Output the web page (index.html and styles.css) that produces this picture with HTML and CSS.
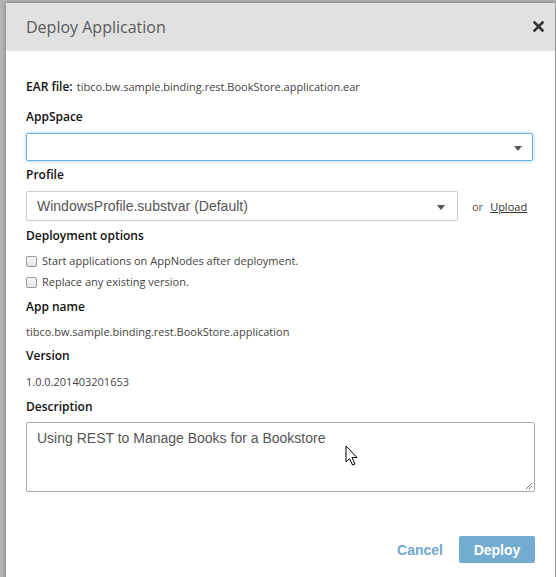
FILE: index.html
```html
<!DOCTYPE html>
<html>
<head>
<meta charset="utf-8">
<link rel="stylesheet" href="styles.css">
</head>
<body>
<div class="modal">
  <div class="modal-header">
    <div class="title">Deploy Application</div>
    <svg class="close" width="11" height="11" viewBox="0 0 11 11"><path d="M1.5 1.5 L9.5 9.5 M9.5 1.5 L1.5 9.5" stroke="#333" stroke-width="2.6" stroke-linecap="square"/></svg>
  </div>
  <div class="modal-body">
    <div class="row ear"><span class="lbl">EAR file:</span> <span class="val">tibco.bw.sample.binding.rest.BookStore.application.ear</span></div>
    <div class="lbl block l-appspace">AppSpace</div>
    <div class="select focus"><span></span><i class="caret"></i></div>
    <div class="lbl block l-profile">Profile</div>
    <div class="profile-row">
      <div class="select profile"><span>WindowsProfile.substvar (Default)</span><i class="caret"></i></div>
      <span class="or">or</span><span class="upload">Upload</span>
    </div>
    <div class="lbl block l-deploy">Deployment options</div>
    <div class="check c1"><span class="box"></span><span>Start applications on AppNodes after deployment.</span></div>
    <div class="check c2"><span class="box"></span><span>Replace any existing version.</span></div>
    <div class="lbl block l-app">App name</div>
    <div class="val block v-app">tibco.bw.sample.binding.rest.BookStore.application</div>
    <div class="lbl block l-ver">Version</div>
    <div class="val block v-ver">1.0.0.201403201653</div>
    <div class="lbl block l-desc">Description</div>
    <div class="textarea">Using REST to Manage Books for a Bookstore
      <svg class="grip" width="8" height="8" viewBox="0 0 8 8"><path d="M7 1 L1 7 M7 4 L4 7" stroke="#777" stroke-width="1"/></svg>
    </div>
    <div class="footer">
      <span class="cancel">Cancel</span>
      <span class="deploy">Deploy</span>
    </div>
  </div>
</div>
<svg class="cursor" width="14" height="22" viewBox="0 0 14 22"><path d="M1 1 L1 17 L4.5 13.5 L7.5 20 L10 19 L7 12.5 L12 12.5 Z" fill="#fff" stroke="#000" stroke-width="1" stroke-linejoin="miter"/></svg>
</body>
</html>
```
FILE: styles.css
```css
html, body {
  margin: 0;
  padding: 0;
}
body {
  width: 556px;
  height: 577px;
  overflow: hidden;
  background: #b4b4b4;
  position: relative;
  font-family: "Open Sans", "Noto Sans", sans-serif;
}
.modal {
  margin: 3px 0 0 6px;
  width: 549px;
  height: 580px;
  background: #fff;
  box-shadow: 0 0 4px rgba(0,0,0,0.4);
}
.modal-header {
  height: 48px;
  background: #e1e1e1;
  display: flex;
  align-items: center;
  justify-content: space-between;
  padding: 0 11px 0 20px;
}
.title {
  font-size: 16px;
  color: #5a5a5a;
  margin-top: -1px;
}
.close {
  display: block;
  margin-top: -2px;
}
.modal-body {
  padding: 26px 20px 0 20px;
}
.lbl {
  font-weight: 600;
  font-size: 12px;
  color: #111;
  line-height: 16px;
}
.val {
  font-size: 11px;
  color: #444;
  line-height: 16px;
}
.block { display: block; }
.row.ear { line-height: 16px; }
.l-appspace { margin-top: 14px; }
.select {
  margin-top: 8px;
  height: 28px;
  box-sizing: border-box;
  border: 1px solid #ccc;
  border-radius: 2px;
  display: flex;
  align-items: center;
  justify-content: space-between;
  padding: 0 10px 0 10px;
  font-family: "Liberation Sans", Arial, sans-serif;
  font-size: 14px;
  color: #555;
}
.select.focus {
  width: 507px;
  border-color: #66afe9;
  box-shadow: 0 0 4px rgba(102,175,233,0.6);
}
.caret {
  width: 0;
  height: 0;
  border-left: 4.5px solid transparent;
  border-right: 4.5px solid transparent;
  border-top: 5px solid #555;
  margin-top: 2px;
}
.l-profile { margin-top: 6px; }
.profile-row {
  margin-top: 8px;
  display: flex;
  align-items: center;
}
.select.profile {
  margin-top: 0;
  width: 432px;
  height: 30px;
  padding: 0 12px 0 10px;
}
.or {
  font-size: 11px;
  color: #555;
  margin-left: 14px;
}
.upload {
  font-size: 11px;
  color: #333;
  margin-left: 7px;
  text-decoration: underline;
}
.l-deploy { margin-top: 7px; }
.check {
  display: flex;
  align-items: center;
  font-size: 11px;
  color: #444;
  line-height: 16px;
}
.c1 { margin-top: 9px; }
.c2 { margin-top: 5px; }
.box {
  width: 11px;
  height: 11px;
  box-sizing: border-box;
  border: 1px solid #999;
  border-radius: 2px;
  background: linear-gradient(#fafafa, #e3e3e3);
  margin-right: 5px;
}
.l-app { margin-top: 9px; }
.v-app { margin-top: 9px; }
.l-ver { margin-top: 8px; }
.v-ver { margin-top: 10px; }
.l-desc { margin-top: 9px; }
.textarea {
  position: relative;
  margin-top: 7px;
  width: 509px;
  height: 70px;
  box-sizing: border-box;
  border: 1px solid #aaa;
  border-radius: 2px;
  padding: 6px 10px;
  font-family: "Liberation Sans", Arial, sans-serif;
  font-size: 14px;
  color: #555;
  line-height: 18px;
}
.grip {
  position: absolute;
  right: 1px;
  bottom: 1px;
}
.footer {
  margin-top: 44px;
  display: flex;
  justify-content: flex-end;
  align-items: center;
  font-family: "Liberation Sans", Arial, sans-serif;
  font-weight: bold;
  font-size: 14px;
}
.cancel {
  color: #6fa8d0;
  margin-right: 16px;
}
.deploy {
  background: #72acd1;
  color: #fff;
  width: 76px;
  height: 27px;
  border-radius: 2px;
  display: flex;
  align-items: center;
  justify-content: center;
}
.cursor {
  position: absolute;
  left: 345px;
  top: 445px;
}
```
